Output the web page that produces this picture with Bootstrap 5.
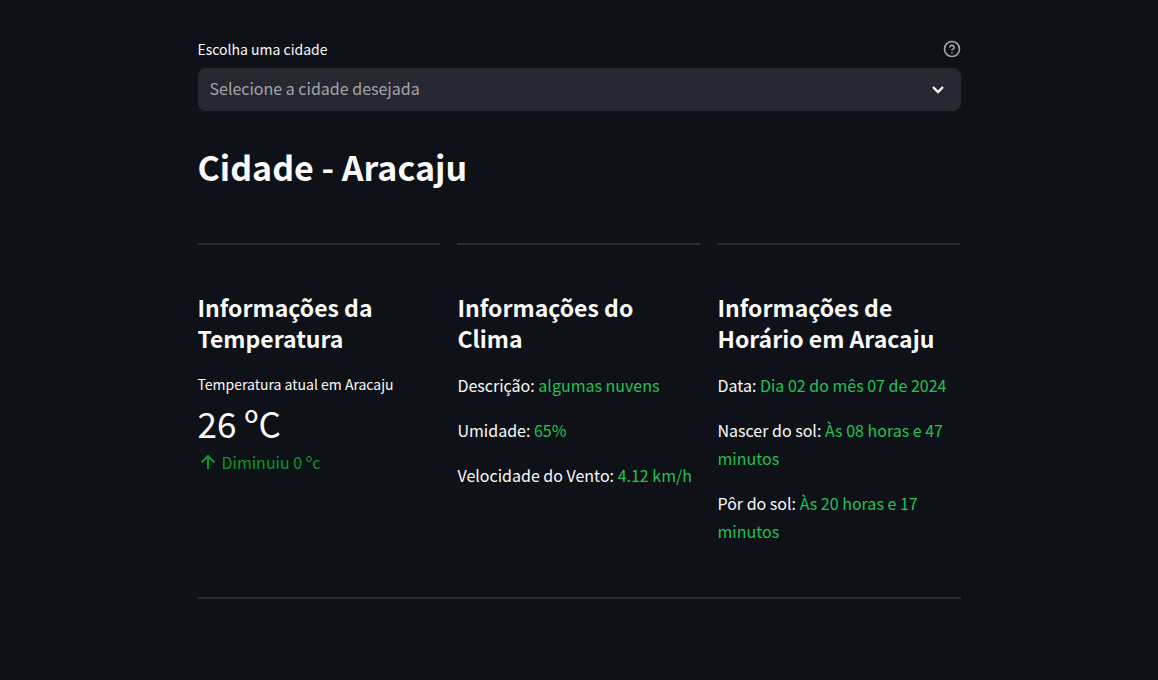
<!DOCTYPE html>
<html lang="pt-BR">
<head>
<meta charset="utf-8">
<meta name="viewport" content="width=device-width, initial-scale=1">
<title>Clima - Aracaju</title>
<link href="https://cdn.jsdelivr.net/npm/bootstrap@5.3.0/dist/css/bootstrap.min.css" rel="stylesheet">
<style>
body { background: #0e1117; color: #fafafa; font-family: "Noto Sans CJK JP", "Noto Sans", sans-serif; font-size: 16px; line-height: 28px; }
.page { max-width: 795px; padding: 36px 16px; }
.field-head { margin-bottom: 6px; }
.caption-text { font-size: 14px; line-height: 26px; }
.help-btn { color: #a3a4a8; line-height: 0; }
.city-select { height: 43px; padding: 0 48px 4px 12px; background-color: #262730; background-position: right 16px center; background-size: 14px 14px; border: 0; border-radius: 8px; color: #a3a4a8; font-size: 16px;
  background-image: url("data:image/svg+xml,%3csvg xmlns='http://www.w3.org/2000/svg' viewBox='0 0 14 14'%3e%3cpath d='M2 4 7 9l5-5' fill='none' stroke='%23fafafa' stroke-width='2.400'/%3e%3c/svg%3e"); }
.city-title { font-size: 34px; line-height: 48px; margin: 32px 0 52px; }
.columns-row { --bs-gutter-x: 17px; }
.rule { border-top: 2px solid #2a2c31; opacity: 1; margin: 0; }
.section-title { font-size: 23px; line-height: 31px; margin: 47px 0 17px; }
.info p { margin-bottom: 17px; }
.good { color: #21c354; }
.reading { font-size: 35px; line-height: 52px; }
.delta { color: #09972f; line-height: 26px; }
.last-rule { margin-top: 52px; }
</style>
</head>
<body>
<main class="container page">
  <div class="field-head d-flex justify-content-between align-items-center">
    <label for="city" class="caption-text">Escolha uma cidade</label>
    <button type="button" class="help-btn btn p-0 border-0" aria-label="Ajuda">
      <svg width="18" height="18" viewBox="0 0 24 24" fill="none" stroke="currentColor" stroke-width="2.2" stroke-linecap="round" stroke-linejoin="round"><circle cx="12" cy="12" r="10"/><path d="M9.100 9a3 3 0 0 1 5.800 1c0 2-3 3-3 3M12 17h.01"/></svg>
    </button>
  </div>
  <select id="city" class="form-select city-select">
    <option selected>Selecione a cidade desejada</option>
    <option>Aracaju</option>
  </select>
  <h1 class="city-title fw-bold">Cidade - Aracaju</h1>
  <div class="row columns-row">
    <section class="col-4">
      <hr class="rule">
      <h2 class="section-title fw-bold">Informações da Temperatura</h2>
      <div class="caption-text">Temperatura atual em Aracaju</div>
      <div class="reading">26 ºC</div>
      <div class="delta d-flex align-items-center gap-1">
        <svg width="20" height="20" viewBox="0 0 20 20" fill="none" stroke="currentColor" stroke-width="2"><path d="M10 17V4M3.500 10.500 10 4l6.500 6.500"/></svg>
        <span>Diminuiu 0 ºc</span>
      </div>
    </section>
    <section class="col-4 info">
      <hr class="rule">
      <h2 class="section-title fw-bold">Informações do<br>Clima</h2>
      <p>Descrição: <span class="good">algumas nuvens</span></p>
      <p>Umidade: <span class="good">65%</span></p>
      <p>Velocidade do Vento: <span class="good">4.12 km/h</span></p>
    </section>
    <section class="col-4 info">
      <hr class="rule">
      <h2 class="section-title fw-bold">Informações de Horário em Aracaju</h2>
      <p>Data: <span class="good">Dia 02 do mês 07 de 2024</span></p>
      <p>Nascer do sol: <span class="good">Às 08 horas e 47 minutos</span></p>
      <p class="mb-0">Pôr do sol: <span class="good">Às 20 horas e 17 minutos</span></p>
    </section>
  </div>
  <hr class="rule last-rule">
</main>
<script src="https://cdn.jsdelivr.net/npm/bootstrap@5.3.0/dist/js/bootstrap.bundle.min.js"></script>
</body>
</html>
